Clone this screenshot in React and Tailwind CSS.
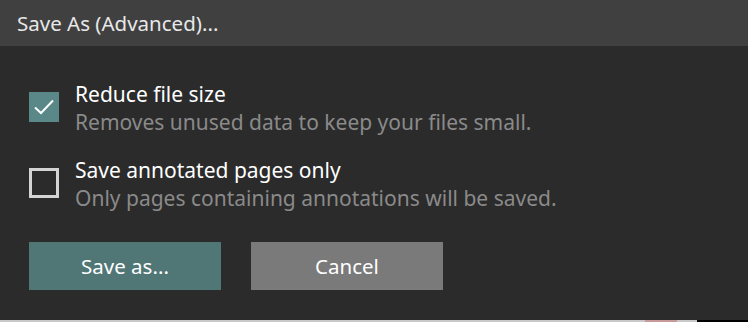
import React from "react";

const Check = ({ checked }) =>
  checked ? (
    <div className="w-[30px] h-[30px] bg-[#5a8787] flex items-center justify-center shrink-0">
      <svg width="24" height="24" viewBox="0 0 24 24" fill="none">
        <path d="M3 12.5 L9 18 L21 5.5" stroke="#ffffff" strokeWidth="2" />
      </svg>
    </div>
  ) : (
    <div className="w-[30px] h-[30px] border-[3px] border-[#d4d4d4] shrink-0" />
  );

const Option = ({ checked, title, hint }) => (
  <div className="flex items-start gap-4">
    <div className="pt-[12px]">
      <Check checked={checked} />
    </div>
    <div className="flex flex-col">
      <span className="text-[21px] leading-[29px] text-white">{title}</span>
      <span className="text-[21px] leading-[26px] text-[#8a8a8a]">{hint}</span>
    </div>
  </div>
);

export default function App() {
  return (
    <div className="w-[748px] h-[322px] bg-[#2b2b2b] flex flex-col font-['Noto_Sans',sans-serif]">
      <div className="h-[46px] bg-[#404040] flex items-center px-[17px] text-[20.5px] text-[#e8e8e8]">
        Save As (Advanced)...
      </div>
      <div className="flex-1 flex flex-col pl-[29px] pt-[34px] gap-[21px]">
        <Option
          checked
          title="Reduce file size"
          hint="Removes unused data to keep your files small."
        />
        <Option
          title="Save annotated pages only"
          hint="Only pages containing annotations will be saved."
        />
        <div className="flex gap-[30px] mt-[10px]">
          <button className="w-[192px] h-[48px] bg-[#507676] text-white text-[20.5px]">
            Save as...
          </button>
          <button className="w-[192px] h-[48px] bg-[#7a7a7a] text-white text-[20.5px]">
            Cancel
          </button>
        </div>
      </div>
      <div className="h-[2px] flex">
        <div className="w-[645px] bg-[#c8c8c8]" />
        <div className="w-[32px] bg-[#c89a9a]" />
        <div className="w-[20px] bg-[#c8c8c8]" />
        <div className="flex-1 bg-black" />
      </div>
    </div>
  );
}
